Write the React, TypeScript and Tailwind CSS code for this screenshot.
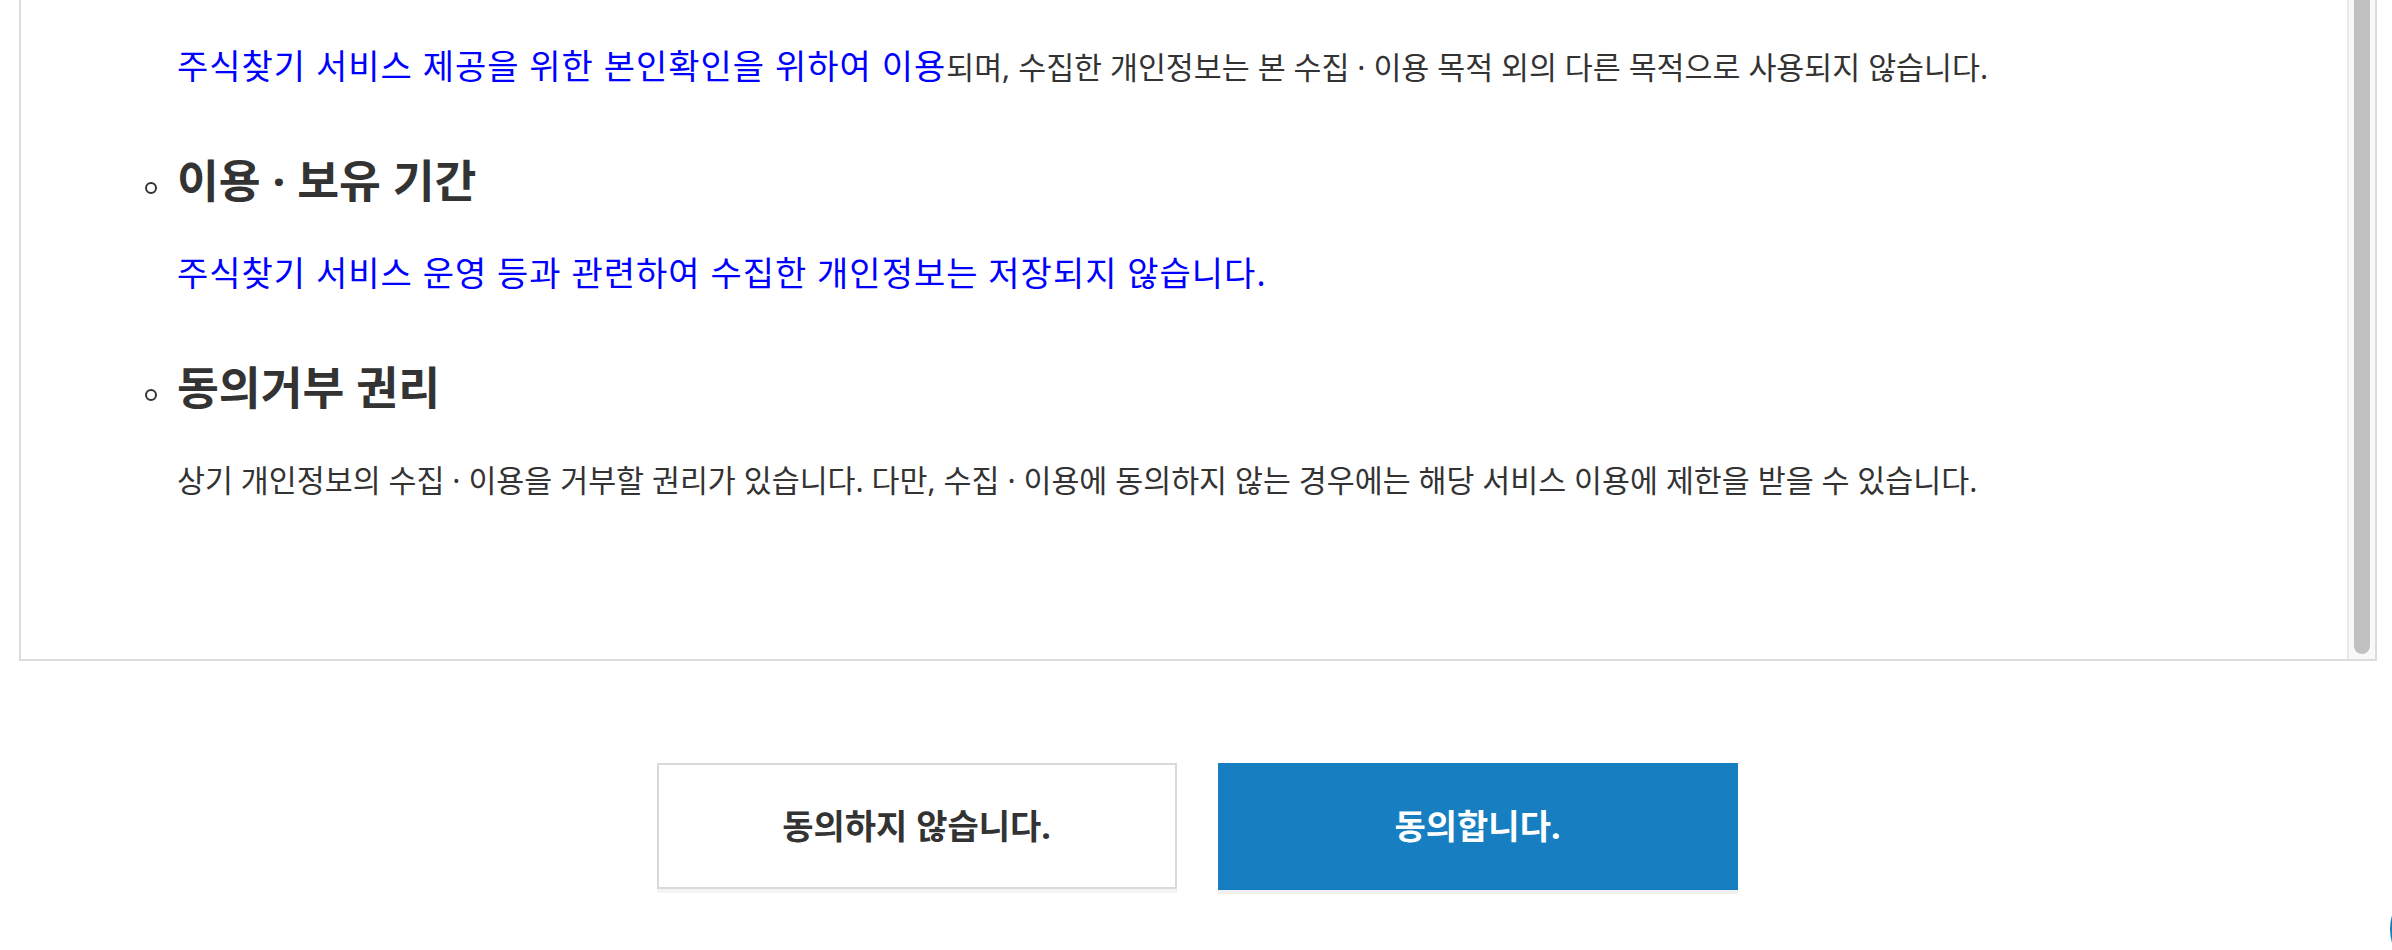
const sections = [
  {
    title: "이용 · 보유 기간",
    body: (
      <span className="text-[34px] tracking-[1px] text-[#0000ff]">
        주식찾기 서비스 운영 등과 관련하여 수집한 개인정보는 저장되지 않습니다.
      </span>
    ),
  },
  {
    title: "동의거부 권리",
    body: (
      <>
        상기 개인정보의 수집 · 이용을 거부할 권리가 있습니다. 다만, 수집 · 이용에 동의하지 않는 경우에는 해당 서비스
        이용에 제한을 받을 수 있습니다.
      </>
    ),
  },
];

export default function App() {
  return (
    <div className="relative h-[950px] overflow-hidden bg-white font-['Noto_Sans','Noto_Sans_CJK_KR',sans-serif] text-[#333]">
      {/* agreement box, scrolled to bottom */}
      <div className="ml-[19px] flex h-[661px] w-[2358px] overflow-hidden border-x-2 border-b-2 border-[#dcdcdc]">
        <div className="flex-1 pl-[156px] pt-[44px]">
          <p className="text-[30.4px] leading-[45px]">
            <span className="text-[34px] tracking-[1px] text-[#0000ff]">
              주식찾기 서비스 제공을 위한 본인확인을 위하여 이용
            </span>
            되며, 수집한 개인정보는 본 수집 · 이용 목적 외의 다른 목적으로 사용되지 않습니다.
          </p>

          <ul>
            {sections.map((s) => (
              <li key={s.title} className="mt-[60px]">
                <div className="-ml-[32px] flex items-start">
                  <span className="mt-[32px] h-[12px] w-[12px] flex-none rounded-full border-2 border-[#333]" />
                  <h3 className="ml-[20px] text-[45.5px] font-bold leading-[60px]">{s.title}</h3>
                </div>
                <p className="mt-[41px] text-[30.4px] leading-[45px]">{s.body}</p>
              </li>
            ))}
          </ul>
        </div>

        {/* scrollbar */}
        <div className="relative w-[28px] flex-none border-l-2 border-[#e8e8e8] bg-[#f8f8f8]">
          <div className="absolute -top-[20px] left-[5px] h-[674px] w-[16px] rounded-b-full bg-[#c1c1c1]" />
        </div>
      </div>

      <div className="mt-[102px] flex justify-center gap-[41px] pl-[2px]">
        <button className="flex h-[126px] w-[520px] items-center justify-center border-2 border-[#d9d9d9] bg-white text-[34px] font-bold text-[#333] shadow-[0_4px_0_#f4f4f4]">
          동의하지 않습니다.
        </button>
        <button className="flex h-[127px] w-[520px] items-center justify-center bg-[#177fc1] text-[34px] font-bold text-white shadow-[0_4px_0_#f0f0f0]">
          동의합니다.
        </button>
      </div>

      {/* floating button peeking from the edge */}
      <div className="absolute -right-[98px] top-[879px] h-[100px] w-[100px] rounded-full bg-[#177fc1]" />
    </div>
  );
}
